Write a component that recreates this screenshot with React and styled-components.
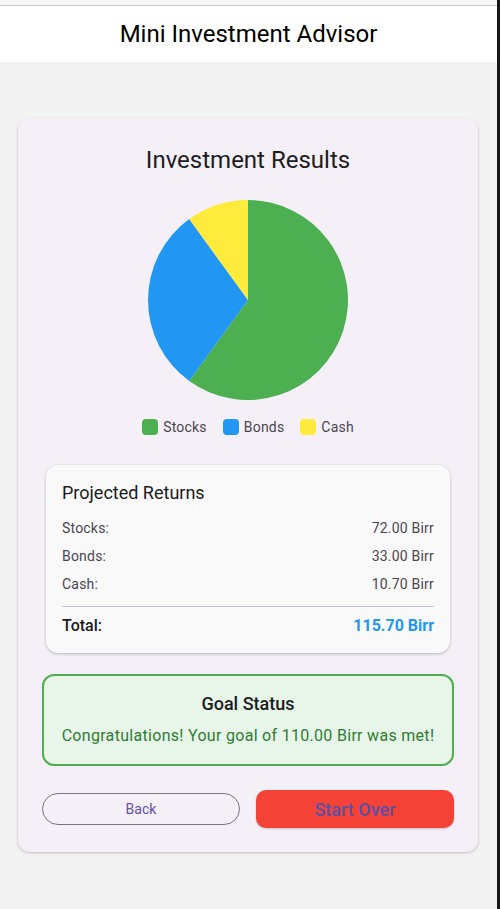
import React from "react";
import styled, { createGlobalStyle } from "styled-components";

const Global = createGlobalStyle`
  html, body { margin: 0; padding: 0; }
  body { font-family: Roboto, "Noto Sans", sans-serif; background: #1c1b1d; }
  * { box-sizing: border-box; }
`;

const Frame = styled.div`
  display: flex;
  width: 500px;
  height: 909px;
`;

const Screen = styled.div`
  width: 497px;
  height: 909px;
  display: flex;
  flex-direction: column;
  background: #f3f3f3;
  overflow: hidden;
`;

const Edge = styled.div`
  flex: 1;
  background: #17171a;
`;

const TopStrip = styled.div`
  height: 6px;
  background: #f7f7f7;
  border-bottom: 1px solid #c9c9c9;
`;

const Header = styled.header`
  height: 56px;
  background: #ffffff;
  display: flex;
  align-items: center;
  justify-content: center;
  font-size: 24px;
  color: #000;
  padding-bottom: 1px;
`;

const Body = styled.main`
  padding: 56px 19px 0 18px;
`;

const Card = styled.section`
  background: #f5f0f8;
  border-radius: 12px;
  box-shadow: 0 1px 3px rgba(0, 0, 0, 0.22);
  padding: 28px 24px 24px;
  display: flex;
  flex-direction: column;
  align-items: stretch;
`;

const Title = styled.h2`
  margin: 0;
  font-size: 24px;
  line-height: 28px;
  font-weight: 400;
  text-align: center;
  color: #1d1b20;
`;

const ChartWrap = styled.div`
  display: flex;
  justify-content: center;
  margin-top: 26px;
`;

const Legend = styled.div`
  display: flex;
  justify-content: center;
  gap: 16px;
  margin-top: 19px;
`;

const LegendItem = styled.div`
  display: flex;
  align-items: center;
  gap: 5px;
  font-size: 14px;
  line-height: 16px;
  color: #49454f;
  letter-spacing: 0.2px;
`;

const Swatch = styled.span`
  width: 16px;
  height: 16px;
  border-radius: 4px;
  background: ${(p) => p.$color};
`;

const ReturnsCard = styled.div`
  margin: 30px 4px 0;
  background: #f9f9fa;
  border-radius: 12px;
  box-shadow: 0 1px 3px rgba(0, 0, 0, 0.25);
  padding: 16px;
`;

const SubTitle = styled.h3`
  margin: 0 0 9px;
  font-size: 18px;
  line-height: 24px;
  font-weight: 400;
  color: #1d1b20;
`;

const Row = styled.div`
  display: flex;
  justify-content: space-between;
  align-items: center;
  height: 28px;
  font-size: 14px;
  color: #4a4650;
  letter-spacing: 0.2px;
`;

const Divider = styled.hr`
  margin: 8px 0 6px;
  border: none;
  border-top: 1px solid #c6c2d4;
`;

const TotalRow = styled.div`
  display: flex;
  justify-content: space-between;
  align-items: center;
  height: 24px;
  font-size: 16px;
  font-weight: 500;
  color: #1d1b20;
`;

const TotalValue = styled.span`
  color: #2196f3;
  font-weight: 700;
`;

const GoalBox = styled.div`
  margin-top: 21px;
  background: #e8f5e9;
  border: 2px solid #4caf50;
  border-radius: 12px;
  padding: 16px 8px;
  display: flex;
  flex-direction: column;
  align-items: center;
  gap: 8px;
`;

const GoalTitle = styled.div`
  font-size: 18px;
  line-height: 24px;
  font-weight: 500;
  color: #1d1b20;
`;

const GoalText = styled.div`
  font-size: 16px;
  line-height: 24px;
  color: #2e7d32;
  letter-spacing: 0.3px;
`;

const Buttons = styled.div`
  margin-top: 24px;
  display: grid;
  grid-template-columns: 1fr 1fr;
  gap: 16px;
  align-items: center;
`;

const OutlineButton = styled.button`
  height: 32px;
  border: 1px solid #79747e;
  border-radius: 16px;
  background: transparent;
  color: #6750a4;
  font-family: Roboto, sans-serif;
  font-size: 14px;
  letter-spacing: 0.1px;
`;

const FilledButton = styled.button`
  height: 38px;
  border: none;
  border-radius: 10px;
  background: #f44336;
  color: #5d4ea6;
  font-family: Roboto, sans-serif;
  font-size: 18px;
  font-weight: 500;
  box-shadow: 0 1px 2px rgba(0, 0, 0, 0.2);
`;

const data = [
  { label: "Stocks", value: 72.0, share: 60, color: "#4caf50" },
  { label: "Bonds", value: 33.0, share: 30, color: "#2196f3" },
  { label: "Cash", value: 10.7, share: 10, color: "#ffeb3b" },
];

function Pie({ size = 200 }) {
  const r = size / 2;
  const total = data.reduce((s, d) => s + d.share, 0);
  let start = 0;
  const pt = (a) => [r + r * Math.sin(a), r - r * Math.cos(a)];
  return (
    <svg width={size} height={size} viewBox={`0 0 ${size} ${size}`}>
      {data.map((d) => {
        const sweep = (d.share / total) * Math.PI * 2;
        const [x1, y1] = pt(start);
        const [x2, y2] = pt(start + sweep);
        const large = sweep > Math.PI ? 1 : 0;
        const path = `M${r},${r} L${x1},${y1} A${r},${r} 0 ${large} 1 ${x2},${y2} Z`;
        start += sweep;
        return <path key={d.label} d={path} fill={d.color} />;
      })}
    </svg>
  );
}

export default function App() {
  return (
    <>
      <Global />
      <Frame>
        <Screen>
          <TopStrip />
          <Header>Mini Investment Advisor</Header>
          <Body>
            <Card>
              <Title>Investment Results</Title>
              <ChartWrap>
                <Pie />
              </ChartWrap>
              <Legend>
                {data.map((d) => (
                  <LegendItem key={d.label}>
                    <Swatch $color={d.color} />
                    {d.label}
                  </LegendItem>
                ))}
              </Legend>
              <ReturnsCard>
                <SubTitle>Projected Returns</SubTitle>
                {data.map((d) => (
                  <Row key={d.label}>
                    <span>{d.label}:</span>
                    <span>{d.value.toFixed(2)} Birr</span>
                  </Row>
                ))}
                <Divider />
                <TotalRow>
                  <span>Total:</span>
                  <TotalValue>115.70 Birr</TotalValue>
                </TotalRow>
              </ReturnsCard>
              <GoalBox>
                <GoalTitle>Goal Status</GoalTitle>
                <GoalText>Congratulations! Your goal of 110.00 Birr was met!</GoalText>
              </GoalBox>
              <Buttons>
                <OutlineButton>Back</OutlineButton>
                <FilledButton>Start Over</FilledButton>
              </Buttons>
            </Card>
          </Body>
        </Screen>
        <Edge />
      </Frame>
    </>
  );
}
